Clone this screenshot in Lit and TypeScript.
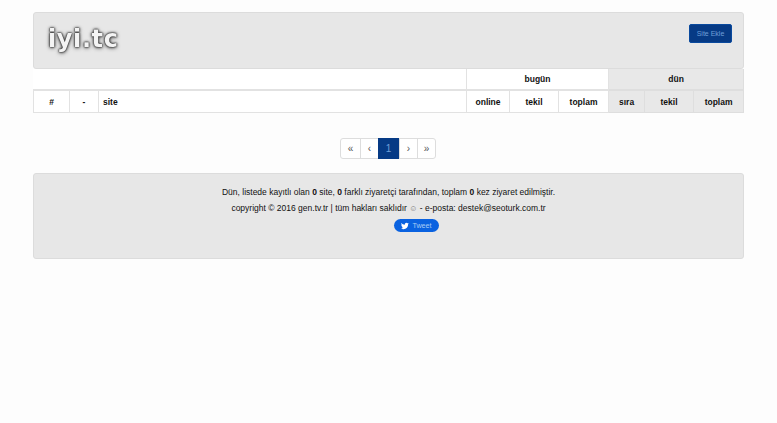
import { LitElement, html, css } from "lit";
import { customElement } from "lit/decorators.js";

@customElement("app-root")
export class AppRoot extends LitElement {
  static styles = css`
    :host {
      display: block;
      min-height: 423px;
      background: #fdfdfd;
      font-family: "Liberation Sans", Arial, sans-serif;
      color: #111;
      font-size: 8.5px;
    }
    .wrap {
      width: 711px;
      margin-left: 33px;
      padding-top: 12px;
    }
    .panel {
      background: #e7e7e7;
      border: 1px solid #dcdcdc;
      border-radius: 3px;
      box-sizing: border-box;
    }
    .head {
      height: 57px;
      display: flex;
      justify-content: space-between;
      align-items: flex-start;
      padding: 11px 11px 0 14px;
    }
    .logo {
      font-family: "DejaVu Sans", sans-serif;
      font-weight: bold;
      font-size: 24px;
      line-height: 30px;
      letter-spacing: 0.6px;
      color: #f4f4f4;
      text-shadow: 0 0 1px #222, 0 0 2px #333, 0 0 3px #444, 0 1px 4px #666;
      filter: blur(0.5px);
    }
    .btn {
      width: 43px;
      height: 19px;
      background: #063a85;
      border: 1px solid #0a4a9e;
      border-radius: 2px;
      color: #6f9fd8;
      font-size: 7px;
      display: flex;
      align-items: center;
      justify-content: center;
      box-sizing: border-box;
    }
    table {
      width: 710px;
      table-layout: fixed;
      border-collapse: collapse;
      background: #fff;
      font-size: 8.5px;
      font-weight: bold;
      color: #111;
    }
    td {
      border: 1px solid #e2e2e2;
      border-width: 2px 1px;
      text-align: center;
      padding: 0;
      height: 20px;
    }
    tr.r1 td { border-top: 0; }
    tr.r2 td { border-bottom-width: 1px; height: 21px; }
    .site { text-align: left; padding-left: 4px; }
    .blank { border-left: 0; }
    .gray { background: #e8e8e8; border-color: #dedede; }
    .pager-row {
      display: flex;
      justify-content: center;
      padding: 25px 1px 0 0;
    }
    .pager {
      display: flex;
      height: 21px;
      border: 1px solid #dddddd;
      border-radius: 3px;
      box-sizing: border-box;
      color: #555;
      font-size: 10px;
      background: #fff;
    }
    .pager span {
      display: flex;
      align-items: center;
      justify-content: center;
      box-sizing: border-box;
      border-left: 1px solid #dddddd;
      width: 18px;
    }
    .pager span:first-child { border-left: 0; width: 19px; }
    .pager .on {
      background: #063a85;
      color: #6f9fd8;
      width: 21px;
      border: 0;
      margin: -1px 0;
    }
    .foot {
      margin-top: 14px;
      height: 86px;
      text-align: center;
      font-size: 8.5px;
      line-height: 16px;
      padding-top: 10px;
      color: #111;
    }
    .foot p { margin: 0; }
    .tweet-row { display: flex; justify-content: center; padding: 2px 0 0 56px; }
    .tweet {
      display: flex;
      align-items: center;
      gap: 3px;
      width: 45px;
      height: 13px;
      justify-content: center;
      border-radius: 7px;
      background: #0a62e0;
      color: #a8cdf5;
      font-size: 7.2px;
      line-height: 13px;
    }
    .tweet svg { width: 8px; height: 8px; fill: #fff; }
    .smile { color: #777; font-size: 8px; }
  `;

  render() {
    return html`
      <div class="wrap">
        <div class="panel head">
          <div class="logo">iyi.tc</div>
          <div class="btn">Site Ekle</div>
        </div>
        <table>
          <colgroup>
            <col style="width:36px" /><col style="width:29px" /><col style="width:368px" />
            <col style="width:43px" /><col style="width:49px" /><col style="width:50px" />
            <col style="width:36px" /><col style="width:49px" /><col style="width:50px" />
          </colgroup>
          <tr class="r1">
            <td class="blank" colspan="3"></td>
            <td colspan="3">bugün</td>
            <td class="gray" colspan="3">dün</td>
          </tr>
          <tr class="r2">
            <td>#</td><td>-</td><td class="site">site</td>
            <td>online</td><td>tekil</td><td>toplam</td>
            <td class="gray">sıra</td><td class="gray">tekil</td><td class="gray">toplam</td>
          </tr>
        </table>
        <div class="pager-row">
          <div class="pager">
            <span>«</span><span>‹</span><span class="on">1</span><span>›</span><span>»</span>
          </div>
        </div>
        <div class="panel foot">
          <p>Dün, listede kayıtlı olan <b>0</b> site, <b>0</b> farklı ziyaretçi tarafından, toplam <b>0</b> kez ziyaret edilmiştir.</p>
          <p>copyright © 2016 gen.tv.tr | tüm hakları saklıdır <span class="smile">☺</span> - e-posta: destek@seoturk.com.tr</p>
          <div class="tweet-row">
            <div class="tweet">
              <svg viewBox="0 0 24 24"><path d="M23.6 4.6c-.9.4-1.8.7-2.8.8 1-.6 1.8-1.5 2.1-2.7-.9.6-2 1-3.100 1.200C19 2.900 17.700 2.300 16.300 2.300c-2.700 0-4.900 2.200-4.900 4.900 0 .4 0 .8.100 1.100C7.400 8.100 3.800 6.100 1.400 3.100.900 3.800.700 4.700.700 5.600c0 1.700.900 3.200 2.200 4.100-.800 0-1.600-.200-2.200-.600v.100c0 2.400 1.700 4.400 3.900 4.800-.400.100-.800.200-1.300.200-.300 0-.600 0-.900-.100.600 2 2.400 3.400 4.600 3.400-1.700 1.300-3.800 2.100-6.100 2.100-.400 0-.800 0-1.200-.100 2.200 1.400 4.800 2.200 7.500 2.200 9.100 0 14-7.500 14-14v-.600c1-.700 1.800-1.600 2.400-2.500z"/></svg>
              <span>Tweet</span>
            </div>
          </div>
        </div>
      </div>
    `;
  }
}
